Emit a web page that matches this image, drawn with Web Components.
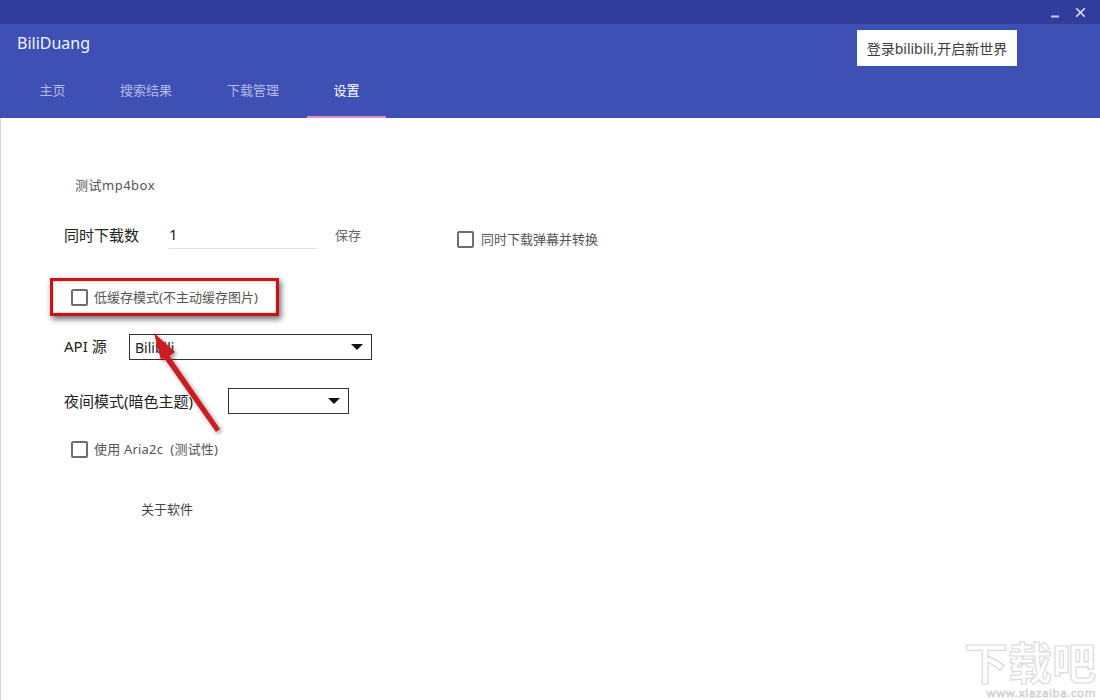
<!DOCTYPE html>
<html lang="zh">
<head>
<meta charset="utf-8">
<title>BiliDuang</title>
<style>
  html, body { margin: 0; padding: 0; background: #fff; }
  body { font-family: "Noto Sans", "Noto Sans CJK SC", sans-serif; }
</style>
</head>
<body>
<bd-app>
  <bd-titlebar slot="titlebar"></bd-titlebar>
  <bd-header slot="header">
    <bd-tab>主页</bd-tab>
    <bd-tab wide>搜索结果</bd-tab>
    <bd-tab wide>下载管理</bd-tab>
    <bd-tab active>设置</bd-tab>
  </bd-header>
  <bd-settings slot="content"></bd-settings>
</bd-app>

<script>
//BARRA SUPERIOR CON LOS BOTONES DE VENTANA
class BdTitlebar extends HTMLElement {
  constructor() {
    super();
    this.attachShadow({ mode: "open" });
  }
  connectedCallback() {
    this.shadowRoot.innerHTML = `
      <style>
        :host { display: flex; justify-content: flex-end; align-items: center; height: 24px; background: #313c9d; padding-right: 14px; gap: 14px; }
        svg { display: block; }
      </style>
      <svg width="11" height="11" viewBox="0 0 11 11"><path d="M1 9.5h8" stroke="#c5cbee" stroke-width="2"/></svg>
      <svg width="11" height="11" viewBox="0 0 11 11"><path d="M1.2 1.2l8.6 8.6M9.8 1.2l-8.6 8.6" stroke="#dfe2f6" stroke-width="1.6"/></svg>
    `;
  }
}
customElements.define("bd-titlebar", BdTitlebar);

class BdHeader extends HTMLElement {
  constructor() {
    super();
    this.attachShadow({ mode: "open" });
  }
  connectedCallback() {
    this.shadowRoot.innerHTML = `
      <style>
        :host { display: flex; flex-direction: column; height: 94px; background: #3f50b5; box-sizing: border-box; }
        .top { display: flex; justify-content: space-between; align-items: flex-start; height: 53px; padding: 6px 83px 0 17px; box-sizing: border-box; }
        .name { font-size: 16px; line-height: 27px; color: #f1f3fc; }
        button { width: 160px; height: 36px; border: 0; padding: 0; background: #fff; color: #3c3c3c; font: 14px "Noto Sans", "Noto Sans CJK SC", sans-serif; position: relative; }
        nav { display: flex; gap: 1px; padding-left: 13px; height: 41px; }
      </style>
      <div class="top">
        <span class="name">BiliDuang</span>
        <button>登录bilibili,开启新世界</button>
      </div>
      <nav><slot></slot></nav>
    `;
  }
}
customElements.define("bd-header", BdHeader);

class BdTab extends HTMLElement {
  constructor() {
    super();
    this.attachShadow({ mode: "open" });
  }
  connectedCallback() {
    this.shadowRoot.innerHTML = `
      <style>
        :host { display: block; width: 79px; height: 41px; box-sizing: border-box; text-align: center; font-size: 13px; line-height: 18px; color: #b3bbe6; padding-top: 4px; }
        :host([wide]) { width: 106px; }
        :host([active]) { color: #fff; border-bottom: 2px solid #e58fc6; }
      </style>
      <slot></slot>
    `;
  }
}
customElements.define("bd-tab", BdTab);

class BdCheckbox extends HTMLElement {
  constructor() {
    super();
    this.attachShadow({ mode: "open" });
  }
  connectedCallback() {
    this.shadowRoot.innerHTML = `
      <style>
        :host { display: inline-flex; align-items: center; gap: var(--gap, 6px); font-size: 13px; color: #555; white-space: pre; }
        i { display: block; width: 17px; height: 17px; box-sizing: border-box; border: 2px solid #6e6e6e; border-radius: 2px; flex: none; }
        span { position: relative; top: -1px; }
      </style>
      <i></i><span><slot></slot></span>
    `;
  }
}
customElements.define("bd-checkbox", BdCheckbox);

class BdSelect extends HTMLElement {
  constructor() {
    super();
    this.attachShadow({ mode: "open" });
  }
  connectedCallback() {
    this.shadowRoot.innerHTML = `
      <style>
        :host { display: flex; align-items: center; justify-content: space-between; height: 26px; box-sizing: border-box; border: 1px solid #333; padding: 0 8px 0 5px; font-size: 14px; color: #222; background: #fff; }
        i { display: block; width: 0; height: 0; border-left: 6px solid transparent; border-right: 6px solid transparent; border-top: 6px solid #111; }
      </style>
      <span><slot></slot></span><i></i>
    `;
  }
}
customElements.define("bd-select", BdSelect);

//PANEL DE AJUSTES
class BdSettings extends HTMLElement {
  constructor() {
    super();
    this.attachShadow({ mode: "open" });
  }
  connectedCallback() {
    this.shadowRoot.innerHTML = `
      <style>
        :host { display: block; position: relative; height: 582px; background: #fff; box-sizing: border-box; padding: 57px 0 0 63px; border-left: 1px solid #d8d8d8; overflow: hidden; color: #222; font-size: 15px; }
        .row { display: flex; align-items: center; }
        .link { font-size: 13px; color: #555; line-height: 20px; }
        .test { height: 20px; padding-left: 11px; letter-spacing: .5px; }
        .count { height: 28px; margin-top: 26px; }
        .count .label { width: 105px; margin-top: -2px; }
        .field { width: 148px; height: 28px; box-sizing: border-box; border-bottom: 1px solid #e0e0e0; line-height: 26px; color: #222; }
        .save { margin: -1px 0 0 18px; color: #666; font-size: 13px; }
        .both { margin: 8px 0 0 96px; --gap: 7px; }
        .low { height: 36px; margin-top: 30px; padding-left: 7px; }
        .api { margin-top: 19px; height: 26px; }
        .api .label { width: 65px; margin-top: -4px; }
        .api bd-select { width: 243px; }
        .night { margin-top: 28px; height: 26px; }
        .night .label { width: 164px; white-space: nowrap; margin-top: -2px; }
        .night bd-select { width: 121px; }
        .aria { margin-top: 27px; height: 17px; padding-left: 7px; }
        .aria bd-checkbox { letter-spacing: .2px; }
        .about { margin: 41px 0 0 77px; height: 20px; color: #444; }
        .mark { position: absolute; right: 4px; bottom: 0; width: 132px; text-align: center; }
        .mark b { display: block; font-size: 44px; line-height: 46px; font-weight: 700; color: #fff; -webkit-text-stroke: 1.2px #dcdcdc; white-space: nowrap; }
        .mark span { display: block; font-size: 11.5px; line-height: 14px; text-align: right; letter-spacing: .6px; color: #fff; -webkit-text-stroke: .6px #c8c8c8; }
      </style>
      <div class="row link test">测试mp4box</div>
      <div class="row count">
        <span class="label">同时下载数</span>
        <div class="field">1</div>
        <span class="save">保存</span>
        <bd-checkbox class="both">同时下载弹幕并转换</bd-checkbox>
      </div>
      <div class="row low"><bd-checkbox>低缓存模式(不主动缓存图片)</bd-checkbox></div>
      <div class="row api"><span class="label">API 源</span><bd-select>Bilibili</bd-select></div>
      <div class="row night"><span class="label">夜间模式(暗色主题)</span><bd-select></bd-select></div>
      <div class="row aria"><bd-checkbox>使用 Aria2c  (测试性)</bd-checkbox></div>
      <div class="row link about">关于软件</div>
      <bd-annotation></bd-annotation>
      <div class="mark"><b>下载吧</b><span>www.xiazaiba.com</span></div>
    `;
  }
}
customElements.define("bd-settings", BdSettings);

//ANOTACION ROJA ENCIMA DEL CONTENIDO (CUADRO Y FLECHA)
class BdAnnotation extends HTMLElement {
  constructor() {
    super();
    this.attachShadow({ mode: "open" });
  }
  connectedCallback() {
    this.shadowRoot.innerHTML = `
      <style>
        :host { display: block; position: absolute; left: 0; top: 0; width: 400px; height: 400px; pointer-events: none; }
        .box { position: absolute; left: 49px; top: 160px; width: 229px; height: 38px; box-sizing: border-box; border: 3px solid #cc1219; box-shadow: 2px 3px 6px rgba(0,0,0,.6), inset 0 0 2px rgba(204,18,25,.5); }
        svg { position: absolute; left: 0; top: 0; overflow: visible; }
      </style>
      <div class="box"></div>
      <svg width="400" height="400" viewBox="0 0 400 400">
        <defs><filter id="s" x="-30%" y="-30%" width="160%" height="160%"><feDropShadow dx="2" dy="2" stdDeviation="2" flood-color="#000" flood-opacity=".4"/></filter></defs>
        <path d="M153 215 L174 234 L168.500 238 L219 311 L215 314 L163 240 L160 242 Z" fill="#cc1a22" filter="url(#s)"/>
      </svg>
    `;
  }
}
customElements.define("bd-annotation", BdAnnotation);

class BdApp extends HTMLElement {
  constructor() {
    super();
    this.attachShadow({ mode: "open" });
  }
  connectedCallback() {
    this.shadowRoot.innerHTML = `
      <style>
        :host { display: flex; flex-direction: column; width: 1100px; height: 700px; overflow: hidden; }
      </style>
      <slot name="titlebar"></slot>
      <slot name="header"></slot>
      <slot name="content"></slot>
    `;
  }
}
customElements.define("bd-app", BdApp);
</script>
</body>
</html>
